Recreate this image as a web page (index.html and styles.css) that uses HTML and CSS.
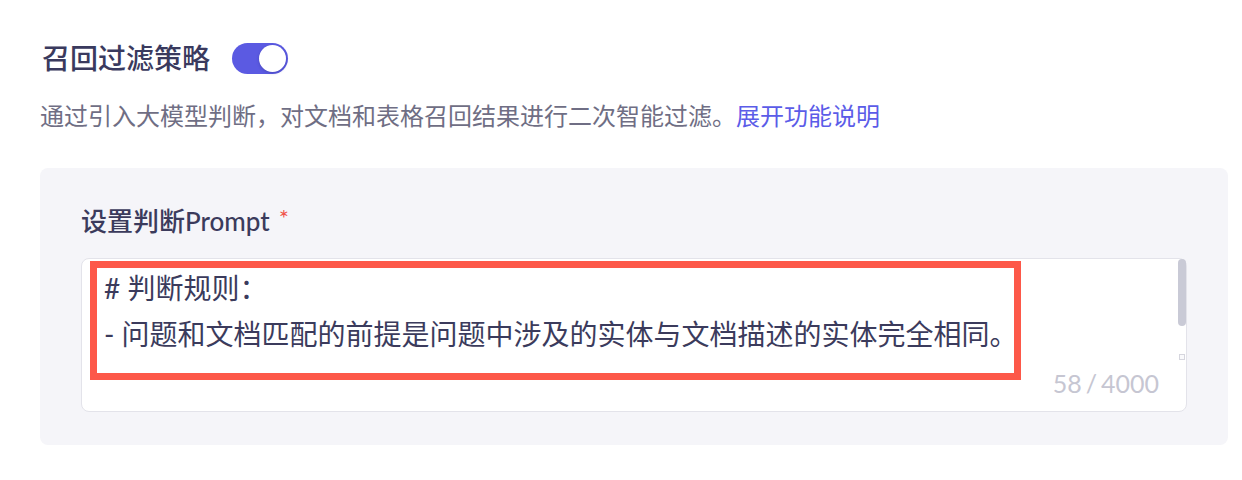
FILE: index.html
```html
<!DOCTYPE html>
<html lang="zh-CN">
<head>
<meta charset="utf-8">
<title>召回过滤策略</title>
<link rel="stylesheet" href="styles.css">
</head>
<body>
<div class="page">
  <div class="header">
    <h2 class="title">召回过滤策略</h2>
    <span class="switch"><span class="knob"></span></span>
  </div>
  <p class="desc">通过引入大模型判断，对文档和表格召回结果进行二次智能过滤。<a class="link" href="#">展开功能说明</a></p>
  <div class="card">
    <div class="label">设置判断Prompt<span class="req">*</span></div>
    <div class="textarea">
      <div class="content">
        <div class="line"># 判断规则：</div>
        <div class="line">- 问题和文档匹配的前提是问题中涉及的实体与文档描述的实体完全相同。</div>
      </div>
      <span class="scroll-thumb"></span>
      <span class="resize"></span>
      <span class="counter">58<span class="slash">/</span>4000</span>
      <span class="highlight"></span>
    </div>
  </div>
</div>
</body>
</html>
```

FILE: styles.css
```css
* { box-sizing: border-box; }
body {
  margin: 0;
  background: #ffffff;
  font-family: Lato, "Noto Sans CJK SC", sans-serif;
  color: #3b3b5c;
}
.page {
  padding: 42px 14px 0 40px;
}
.header {
  display: flex;
  align-items: center;
  gap: 22px;
  height: 32px;
  padding-left: 2px;
}
.title {
  margin: 0;
  font-size: 28px;
  line-height: 32px;
  font-weight: 500;
  color: #3a3a5e;
}
.switch {
  position: relative;
  width: 56px;
  height: 31px;
  border-radius: 16px;
  background: #5b5ae2;
}
.knob {
  position: absolute;
  right: 2px;
  top: 2px;
  width: 27px;
  height: 27px;
  border-radius: 50%;
  background: #ffffff;
  box-shadow: 0 1px 3px rgba(40, 40, 120, 0.35);
}
.desc {
  margin: 26px 0 0 0;
  font-size: 24px;
  line-height: 32px;
  color: #6f6e84;
}
.link {
  color: #5b5ce8;
  text-decoration: none;
}
.card {
  margin-top: 36px;
  background: #f5f5f9;
  border-radius: 8px;
  padding: 36px 41px 33px 41px;
}
.label {
  font-size: 26px;
  line-height: 34px;
  font-weight: 500;
  color: #3b3b5c;
  display: flex;
  align-items: flex-start;
}
.req {
  color: #f0524a;
  font-size: 24px;
  line-height: 28px;
  margin-left: 9px;
  font-weight: 400;
}
.textarea {
  position: relative;
  margin-top: 20px;
  height: 154px;
  background: #ffffff;
  border: 1.5px solid #e3e3ea;
  border-radius: 8px;
  padding: 6px 0 0 22px;
}
.content {
  font-size: 28px;
  line-height: 46px;
  color: #3b3b5c;
}
.scroll-thumb {
  position: absolute;
  right: 0;
  top: 0;
  width: 8px;
  height: 67px;
  border-radius: 4px;
  background: #c9cad6;
}
.resize {
  position: absolute;
  right: 1px;
  top: 95px;
  width: 6px;
  height: 6px;
  border: 1px solid #d6d6de;
  background: #fafafc;
}
.counter {
  position: absolute;
  right: 27px;
  bottom: 14px;
  font-size: 25px;
  line-height: 28px;
  color: #c6c6d2;
}
.slash {
  margin: 0 4px;
}
.highlight {
  position: absolute;
  left: 8px;
  top: 2px;
  width: 931px;
  height: 119px;
  border: 7px solid #fd5849;
}
```
